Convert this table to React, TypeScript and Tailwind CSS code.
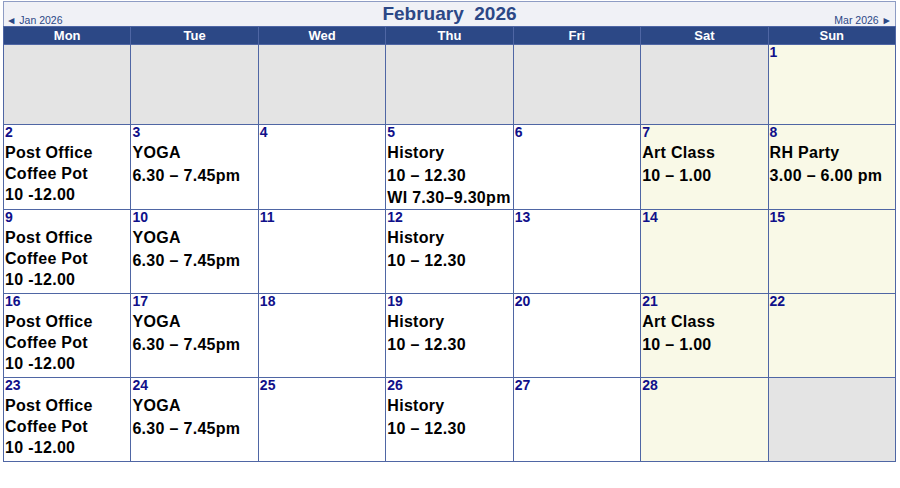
import React from 'react';

type Day = { d: number; lines?: string[]; loose?: boolean } | null;

const postOffice = ['Post Office', 'Coffee Pot', '10 -12.00'];
const yoga = ['YOGA', '6.30 – 7.45pm'];
const history = ['History', '10 – 12.30'];

const weeks: Day[][] = [
  [null, null, null, null, null, null, { d: 1 }],
  [
    { d: 2, lines: postOffice },
    { d: 3, lines: yoga, loose: true },
    { d: 4 },
    { d: 5, lines: [...history, 'WI 7.30–9.30pm'], loose: true },
    { d: 6 },
    { d: 7, lines: ['Art Class', '10 – 1.00'], loose: true },
    { d: 8, lines: ['RH Party', '3.00 – 6.00 pm'], loose: true },
  ],
  [
    { d: 9, lines: postOffice },
    { d: 10, lines: yoga, loose: true },
    { d: 11 },
    { d: 12, lines: history, loose: true },
    { d: 13 },
    { d: 14 },
    { d: 15 },
  ],
  [
    { d: 16, lines: postOffice },
    { d: 17, lines: yoga, loose: true },
    { d: 18 },
    { d: 19, lines: history, loose: true },
    { d: 20 },
    { d: 21, lines: ['Art Class', '10 – 1.00'], loose: true },
    { d: 22 },
  ],
  [
    { d: 23, lines: postOffice },
    { d: 24, lines: yoga, loose: true },
    { d: 25 },
    { d: 26, lines: history, loose: true },
    { d: 27 },
    { d: 28 },
    null,
  ],
];

const dayNames = ['Mon', 'Tue', 'Wed', 'Thu', 'Fri', 'Sat', 'Sun'];

const Cell: React.FC<{ day: Day; weekend: boolean }> = ({ day, weekend }) => {
  if (!day) return <div className="bg-[#e4e4e4]" />;
  return (
    <div className={`${weekend ? 'bg-[#f9f9e7]' : 'bg-white'} px-[1px] overflow-hidden`}>
      <div className="text-[14px] leading-[15px] font-bold text-[#10108a]">{day.d}</div>
      <div className="pt-[2px]">
        {day.lines?.map((l, i) => (
          <div
            key={i}
            className={`text-[16px] leading-[21px] font-bold text-black tracking-[0.3px] whitespace-nowrap ${
              day.loose && i === 1 ? 'mt-[2px]' : ''
            } ${day.loose && i === 2 ? 'mt-[1px]' : ''}`}
          >
            {l}
          </div>
        ))}
      </div>
    </div>
  );
};

export default function App() {
  return (
    <div className="w-[900px] h-[488px] bg-white font-['Liberation_Sans',Arial,sans-serif]">
      <div className="ml-[3px] pt-[1px] w-[893px]">
        <div className="h-[25px] border border-b-0 border-[#8e9cc4] bg-[#f0f1f6] grid grid-cols-[1fr_auto_1fr]">
          <div className="self-end pl-[2px] text-[10.5px] leading-[12px] text-[#2c4886]">
            ◄ Jan 2026
          </div>
          <div className="text-[19px] leading-[24px] font-bold text-[#2c4886] whitespace-pre">
            February  2026
          </div>
          <div className="self-end text-right pr-[3px] text-[10.5px] leading-[12px] text-[#2c4886]">
            Mar 2026 ►
          </div>
        </div>
        <div className="grid grid-cols-7 grid-rows-[17px_79px_84px_83px_83px_83px] gap-px p-px bg-[#4f66a4]">
          {dayNames.map((n) => (
            <div
              key={n}
              className="bg-[#2c4886] text-white text-[13px] leading-[17px] font-bold text-center"
            >
              {n}
            </div>
          ))}
          {weeks.map((w, wi) =>
            w.map((day, di) => <Cell key={`${wi}-${di}`} day={day} weekend={di >= 5} />)
          )}
        </div>
      </div>
    </div>
  );
}
